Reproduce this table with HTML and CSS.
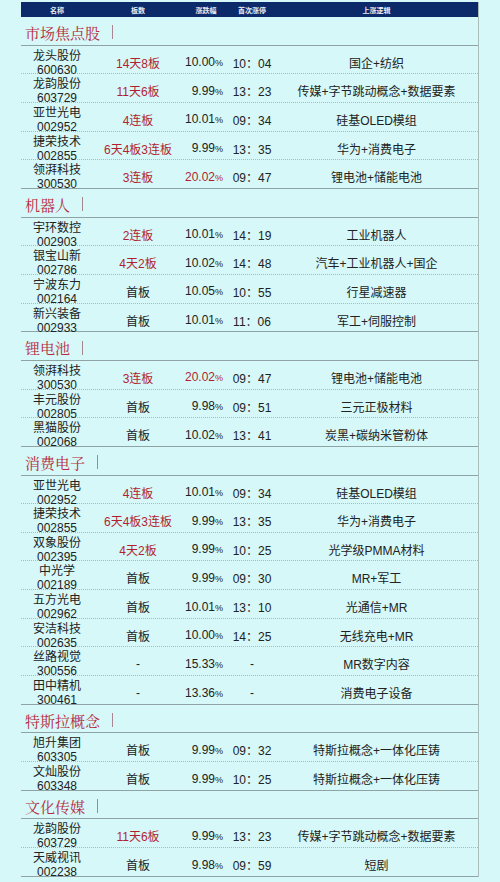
FILE: index.html
```html
<!DOCTYPE html>
<html lang="zh-CN">
<head>
<meta charset="utf-8">
<title>市场焦点股</title>
<link rel="stylesheet" href="styles.css">
</head>
<body>
<div class="table">
  <div class="head">
    <div>名称</div><div>板数</div><div>涨跌幅</div><div>首次涨停</div><div>上涨逻辑</div>
  </div>

  <div class="sec first"><span class="t">市场焦点股</span><span class="bar"></span></div>
  <div class="row"><div class="nm">龙头股份<br>600630</div><div class="bs red">14天8板</div><div class="pc">10.00<span class="p">%</span></div><div class="tm">10：04</div><div class="lg">国企+纺织</div></div>
  <div class="row"><div class="nm">龙韵股份<br>603729</div><div class="bs red">11天6板</div><div class="pc">9.99<span class="p">%</span></div><div class="tm">13：23</div><div class="lg">传媒+字节跳动概念+数据要素</div></div>
  <div class="row"><div class="nm">亚世光电<br>002952</div><div class="bs red">4连板</div><div class="pc">10.01<span class="p">%</span></div><div class="tm">09：34</div><div class="lg">硅基OLED模组</div></div>
  <div class="row"><div class="nm">捷荣技术<br>002855</div><div class="bs red">6天4板3连板</div><div class="pc">9.99<span class="p">%</span></div><div class="tm">13：35</div><div class="lg">华为+消费电子</div></div>
  <div class="row last"><div class="nm">领湃科技<br>300530</div><div class="bs red">3连板</div><div class="pc red">20.02<span class="p">%</span></div><div class="tm">09：47</div><div class="lg">锂电池+储能电池</div></div>

  <div class="sec"><span class="t">机器人</span><span class="bar"></span></div>
  <div class="row"><div class="nm">宇环数控<br>002903</div><div class="bs red">2连板</div><div class="pc">10.01<span class="p">%</span></div><div class="tm">14：19</div><div class="lg">工业机器人</div></div>
  <div class="row"><div class="nm">银宝山新<br>002786</div><div class="bs red">4天2板</div><div class="pc">10.02<span class="p">%</span></div><div class="tm">14：48</div><div class="lg">汽车+工业机器人+国企</div></div>
  <div class="row"><div class="nm">宁波东力<br>002164</div><div class="bs">首板</div><div class="pc">10.05<span class="p">%</span></div><div class="tm">10：55</div><div class="lg">行星减速器</div></div>
  <div class="row last"><div class="nm">新兴装备<br>002933</div><div class="bs">首板</div><div class="pc">10.01<span class="p">%</span></div><div class="tm">11：06</div><div class="lg">军工+伺服控制</div></div>

  <div class="sec"><span class="t">锂电池</span><span class="bar"></span></div>
  <div class="row"><div class="nm">领湃科技<br>300530</div><div class="bs red">3连板</div><div class="pc red">20.02<span class="p">%</span></div><div class="tm">09：47</div><div class="lg">锂电池+储能电池</div></div>
  <div class="row"><div class="nm">丰元股份<br>002805</div><div class="bs">首板</div><div class="pc">9.98<span class="p">%</span></div><div class="tm">09：51</div><div class="lg">三元正极材料</div></div>
  <div class="row last"><div class="nm">黑猫股份<br>002068</div><div class="bs">首板</div><div class="pc">10.02<span class="p">%</span></div><div class="tm">13：41</div><div class="lg">炭黑+碳纳米管粉体</div></div>

  <div class="sec"><span class="t">消费电子</span><span class="bar"></span></div>
  <div class="row"><div class="nm">亚世光电<br>002952</div><div class="bs red">4连板</div><div class="pc">10.01<span class="p">%</span></div><div class="tm">09：34</div><div class="lg">硅基OLED模组</div></div>
  <div class="row"><div class="nm">捷荣技术<br>002855</div><div class="bs red">6天4板3连板</div><div class="pc">9.99<span class="p">%</span></div><div class="tm">13：35</div><div class="lg">华为+消费电子</div></div>
  <div class="row"><div class="nm">双象股份<br>002395</div><div class="bs red">4天2板</div><div class="pc">9.99<span class="p">%</span></div><div class="tm">10：25</div><div class="lg">光学级PMMA材料</div></div>
  <div class="row"><div class="nm">中光学<br>002189</div><div class="bs">首板</div><div class="pc">9.99<span class="p">%</span></div><div class="tm">09：30</div><div class="lg">MR+军工</div></div>
  <div class="row"><div class="nm">五方光电<br>002962</div><div class="bs">首板</div><div class="pc">10.01<span class="p">%</span></div><div class="tm">13：10</div><div class="lg">光通信+MR</div></div>
  <div class="row"><div class="nm">安洁科技<br>002635</div><div class="bs">首板</div><div class="pc">10.00<span class="p">%</span></div><div class="tm">14：25</div><div class="lg">无线充电+MR</div></div>
  <div class="row"><div class="nm">丝路视觉<br>300556</div><div class="bs">-</div><div class="pc">15.33<span class="p">%</span></div><div class="tm">-</div><div class="lg">MR数字内容</div></div>
  <div class="row last"><div class="nm">田中精机<br>300461</div><div class="bs">-</div><div class="pc">13.36<span class="p">%</span></div><div class="tm">-</div><div class="lg">消费电子设备</div></div>

  <div class="sec"><span class="t">特斯拉概念</span><span class="bar"></span></div>
  <div class="row"><div class="nm">旭升集团<br>603305</div><div class="bs">首板</div><div class="pc">9.99<span class="p">%</span></div><div class="tm">09：32</div><div class="lg">特斯拉概念+一体化压铸</div></div>
  <div class="row last"><div class="nm">文灿股份<br>603348</div><div class="bs">首板</div><div class="pc">9.99<span class="p">%</span></div><div class="tm">10：25</div><div class="lg">特斯拉概念+一体化压铸</div></div>

  <div class="sec"><span class="t">文化传媒</span><span class="bar"></span></div>
  <div class="row"><div class="nm">龙韵股份<br>603729</div><div class="bs red">11天6板</div><div class="pc">9.99<span class="p">%</span></div><div class="tm">13：23</div><div class="lg">传媒+字节跳动概念+数据要素</div></div>
  <div class="row last"><div class="nm">天威视讯<br>002238</div><div class="bs">首板</div><div class="pc">9.98<span class="p">%</span></div><div class="tm">09：59</div><div class="lg">短剧</div></div>
</div>
</body>
</html>
```

FILE: styles.css
```css
html, body {
  margin: 0;
  padding: 0;
  background: #d6f8f8;
}
body {
  font-family: "Liberation Sans", "Noto Sans CJK SC", sans-serif;
  color: #222;
  height: 882px;
  overflow: hidden;
}
.table {
  width: 458px;
  margin: 2px 0 0 21px;
  border-right: 1px solid #a9bcbc;
  box-sizing: border-box;
}
.head, .row {
  display: grid;
  grid-template-columns: 72px 90px 46px 46px 203px;
  align-items: center;
}
.head {
  height: 15px;
  background: #0c2a6a;
  color: #e6ecf6;
  font-size: 7px;
  font-weight: bold;
  text-align: center;
}
.row {
  height: 28.67px;
  box-sizing: border-box;
  border-bottom: 1px dotted #a8bcbe;
  font-size: 12px;
}
.row.last {
  border-bottom: 1px solid #8fa3a5;
}
.sec {
  height: 28.67px;
  box-sizing: border-box;
  border-bottom: 1px solid #8fa3a5;
  display: flex;
  align-items: center;
  padding: 3px 0 0 4px;
  font-family: "Noto Serif CJK SC", "Noto Sans CJK SC", serif;
  font-size: 15px;
  color: #b62a3c;
}
.sec .bar {
  display: inline-block;
  width: 1px;
  height: 14px;
  margin-left: 12px;
  background: #a88890;
}
.nm {
  text-align: center;
  line-height: 14px;
  padding-top: 3px;
}
.bs, .tm, .lg {
  text-align: center;
  padding-top: 2px;
}
.pc {
  text-align: right;
  padding: 2px 6px 0 0;
}
.p {
  font-size: 9px;
}
.red {
  color: #b21f30;
}
```
